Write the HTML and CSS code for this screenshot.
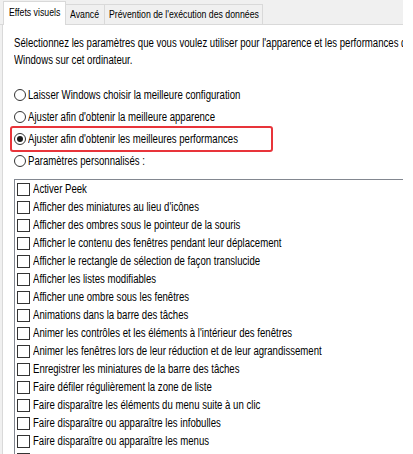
FILE: index.html
```html
<!DOCTYPE html>
<html lang="fr">
<head>
<meta charset="utf-8">
<link rel="stylesheet" href="styles.css">
</head>
<body>
<div class="window">
  <div class="tabs">
    <div class="tab active tab-effets"><span class="t">Effets visuels</span></div>
    <div class="tab tab-avance"><span class="t">Avancé</span></div>
    <div class="tab tab-dep"><span class="t">Prévention de l'exécution des données</span></div>
  </div>
  <div class="panel">
    <p class="intro"><span class="line t">Sélectionnez les paramètres que vous voulez utiliser pour l'apparence et les performances de</span><span class="line t">Windows sur cet ordinateur.</span></p>
    <div class="options">
      <label class="radio-row"><span class="radio"></span><span class="t">Laisser Windows choisir la meilleure configuration</span></label>
      <label class="radio-row"><span class="radio"></span><span class="t">Ajuster afin d'obtenir la meilleure apparence</span></label>
      <label class="radio-row highlighted"><span class="radio checked"></span><span class="t">Ajuster afin d'obtenir les meilleures performances</span></label>
      <label class="radio-row"><span class="radio"></span><span class="t">Paramètres personnalisés :</span></label>
    </div>
    <div class="listbox">
      <div class="check-row"><span class="box"></span><span class="t">Activer Peek</span></div>
      <div class="check-row"><span class="box"></span><span class="t">Afficher des miniatures au lieu d'icônes</span></div>
      <div class="check-row"><span class="box"></span><span class="t">Afficher des ombres sous le pointeur de la souris</span></div>
      <div class="check-row"><span class="box"></span><span class="t">Afficher le contenu des fenêtres pendant leur déplacement</span></div>
      <div class="check-row"><span class="box"></span><span class="t">Afficher le rectangle de sélection de façon translucide</span></div>
      <div class="check-row"><span class="box"></span><span class="t">Afficher les listes modifiables</span></div>
      <div class="check-row"><span class="box"></span><span class="t">Afficher une ombre sous les fenêtres</span></div>
      <div class="check-row"><span class="box"></span><span class="t">Animations dans la barre des tâches</span></div>
      <div class="check-row"><span class="box"></span><span class="t">Animer les contrôles et les éléments à l'intérieur des fenêtres</span></div>
      <div class="check-row"><span class="box"></span><span class="t">Animer les fenêtres lors de leur réduction et de leur agrandissement</span></div>
      <div class="check-row"><span class="box"></span><span class="t">Enregistrer les miniatures de la barre des tâches</span></div>
      <div class="check-row"><span class="box"></span><span class="t">Faire défiler régulièrement la zone de liste</span></div>
      <div class="check-row"><span class="box"></span><span class="t">Faire disparaître les éléments du menu suite à un clic</span></div>
      <div class="check-row"><span class="box"></span><span class="t">Faire disparaître ou apparaître les infobulles</span></div>
      <div class="check-row"><span class="box"></span><span class="t">Faire disparaître ou apparaître les menus</span></div>
      <div class="check-row"><span class="box"></span><span class="t">Lisser les polices écran</span></div>
    </div>
  </div>
</div>
</body>
</html>
```
FILE: styles.css
```css
html, body {
  margin: 0;
  padding: 0;
  background: #ffffff;
  overflow: hidden;
}
body {
  font-family: "Liberation Sans", Arial, sans-serif;
  font-size: 12px;
  color: #000;
}
.t {
  display: inline-block;
  white-space: nowrap;
  transform: scaleX(0.8);
  transform-origin: left center;
}
.window {
  width: 403px;
  height: 454px;
  overflow: hidden;
  background: #f0f0f0;
}
.tabs {
  display: flex;
  align-items: flex-end;
  height: 25px;
  padding-left: 3px;
  border-bottom: 1px solid #d9d9d9;
  box-sizing: border-box;
}
.tab {
  height: 20px;
  line-height: 19px;
  padding: 0 0 0 4px;
  border: 1px solid #d9d9d9;
  border-bottom: none;
  border-left: none;
  box-sizing: border-box;
  white-space: nowrap;
  font-size: 11.5px;
}
.tab .t {
  transform: scaleX(0.76);
}
.tab.active {
  height: 24px;
  line-height: 21px;
  background: #fff;
  border-left: 1px solid #d9d9d9;
  margin-bottom: -1px;
  padding-left: 5px;
}
.tab-effets { width: 63px; }
.tab-avance { width: 39px; }
.tab-dep { width: 158px; }
.panel {
  margin-left: 2px;
  background: #fff;
  border-left: 1px solid #d9d9d9;
  height: 430px;
  padding: 10px 0 0 11px;
}
.intro {
  margin: 0;
  line-height: 17px;
}
.line {
  display: block;
}
.options {
  display: flex;
  flex-direction: column;
  margin-top: 15px;
  margin-left: -4px;
}
.radio-row {
  display: flex;
  align-items: center;
  gap: 2px;
  height: 22px;
  padding-left: 2px;
  white-space: nowrap;
  width: 257px;
  border: 2px solid transparent;
  border-radius: 3px;
  margin: -2px 0;
  box-sizing: content-box;
}
.radio-row + .radio-row {
  margin-top: -2px;
}
.radio-row.highlighted {
  border-color: #e8343a;
}
.radio {
  width: 12px;
  height: 12px;
  border: 1px solid #333;
  border-radius: 50%;
  box-sizing: border-box;
  display: flex;
  align-items: center;
  justify-content: center;
  flex: none;
}
.radio.checked::after {
  content: "";
  width: 6px;
  height: 6px;
  border-radius: 50%;
  background: #1a1a1a;
}
.listbox {
  margin-top: 7px;
  border: 1px solid #828790;
  border-right: none;
  height: 300px;
  overflow: hidden;
}
.check-row {
  display: flex;
  align-items: center;
  gap: 3px;
  height: 18px;
  padding-left: 2px;
  white-space: nowrap;
}
.box {
  width: 13px;
  height: 13px;
  border: 1px solid #333;
  box-sizing: border-box;
  background: #fff;
  flex: none;
}
```
